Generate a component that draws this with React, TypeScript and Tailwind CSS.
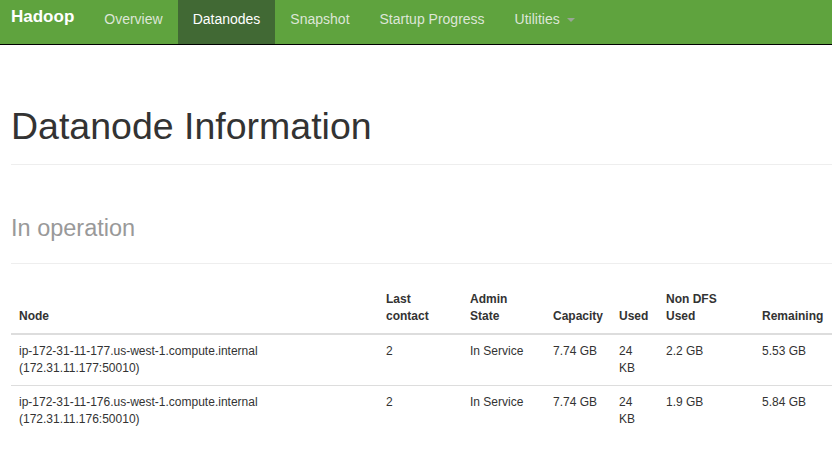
const navItems = ['Overview', 'Datanodes', 'Snapshot', 'Startup Progress'];

const nodes = [
  {
    host: 'ip-172-31-11-177.us-west-1.compute.internal',
    addr: '(172.31.11.177:50010)',
    contact: '2',
    state: 'In Service',
    capacity: '7.74 GB',
    used: '24 KB',
    nonDfs: '2.2 GB',
    remaining: '5.53 GB',
  },
  {
    host: 'ip-172-31-11-176.us-west-1.compute.internal',
    addr: '(172.31.11.176:50010)',
    contact: '2',
    state: 'In Service',
    capacity: '7.74 GB',
    used: '24 KB',
    nonDfs: '1.9 GB',
    remaining: '5.84 GB',
  },
];

function Navbar() {
  return (
    <nav className="flex h-[45px] items-stretch border-b border-black bg-[#5fa33e] pl-[11px]">
      <a className="pr-[15px] pt-[7px] text-[17px] font-bold leading-[20px] text-white" href="#">
        Hadoop
      </a>
      <ul className="flex">
        {navItems.map((item) => {
          const active = item === 'Datanodes';
          return (
            <li key={item}>
              <a
                href="#"
                className={
                  active
                    ? 'block h-full bg-[#416934] px-[15px] pt-[9px] text-[14px] leading-[20px] text-white'
                    : 'block h-full px-[15px] pt-[9px] text-[14px] leading-[20px] text-[#dde6d7]'
                }
              >
                {item}
              </a>
            </li>
          );
        })}
        <li>
          <a
            href="#"
            className="flex h-full items-start px-[15px] pt-[9px] text-[14px] leading-[20px] text-[#dde6d7]"
          >
            Utilities
            {/* caret */}
            <span className="ml-[7px] mt-[9px] h-0 w-0 border-x-[4px] border-t-[4px] border-x-transparent border-t-[#9aa596]" />
          </a>
        </li>
      </ul>
    </nav>
  );
}

function DatanodeTable() {
  return (
    <table className="mt-[19px] w-[821px] table-fixed border-collapse text-[12px] leading-[17px] text-[#333]">
      <colgroup>
        <col className="w-[367px]" />
        <col className="w-[84px]" />
        <col className="w-[83px]" />
        <col className="w-[66px]" />
        <col className="w-[47px]" />
        <col className="w-[96px]" />
        <col className="w-[78px]" />
      </colgroup>
      <thead>
        <tr className="border-b-2 border-[#ddd] text-left align-bottom font-bold">
          <th className="p-2">Node</th>
          <th className="p-2">Last contact</th>
          <th className="p-2">Admin State</th>
          <th className="p-2">Capacity</th>
          <th className="p-2">Used</th>
          <th className="p-2">Non DFS Used</th>
          <th className="p-2">Remaining</th>
        </tr>
      </thead>
      <tbody>
        {nodes.map((n) => (
          <tr key={n.host} className="border-t border-[#ddd] align-top">
            <td className="p-2">
              {n.host}
              <br />
              {n.addr}
            </td>
            <td className="p-2">{n.contact}</td>
            <td className="p-2">{n.state}</td>
            <td className="p-2">{n.capacity}</td>
            <td className="p-2">{n.used}</td>
            <td className="p-2">{n.nonDfs}</td>
            <td className="p-2">{n.remaining}</td>
          </tr>
        ))}
      </tbody>
    </table>
  );
}

export default function App() {
  return (
    <div
      className="h-[462px] w-[832px] overflow-hidden bg-white"
      style={{ fontFamily: '"Liberation Sans", Arial, sans-serif' }}
    >
      <Navbar />
      <main className="pl-[11px]">
        <div className="mt-[61px] border-b border-[#eee] pb-[17px]">
          <h1 className="text-[37.5px] leading-[1.1] font-normal text-[#333]">Datanode Information</h1>
        </div>
        <div className="mt-[51px] border-b border-[#eee] pb-[21px]">
          <h2 className="text-[23.5px] leading-[1.1] font-normal text-[#999]">In operation</h2>
        </div>
        <DatanodeTable />
      </main>
    </div>
  );
}
